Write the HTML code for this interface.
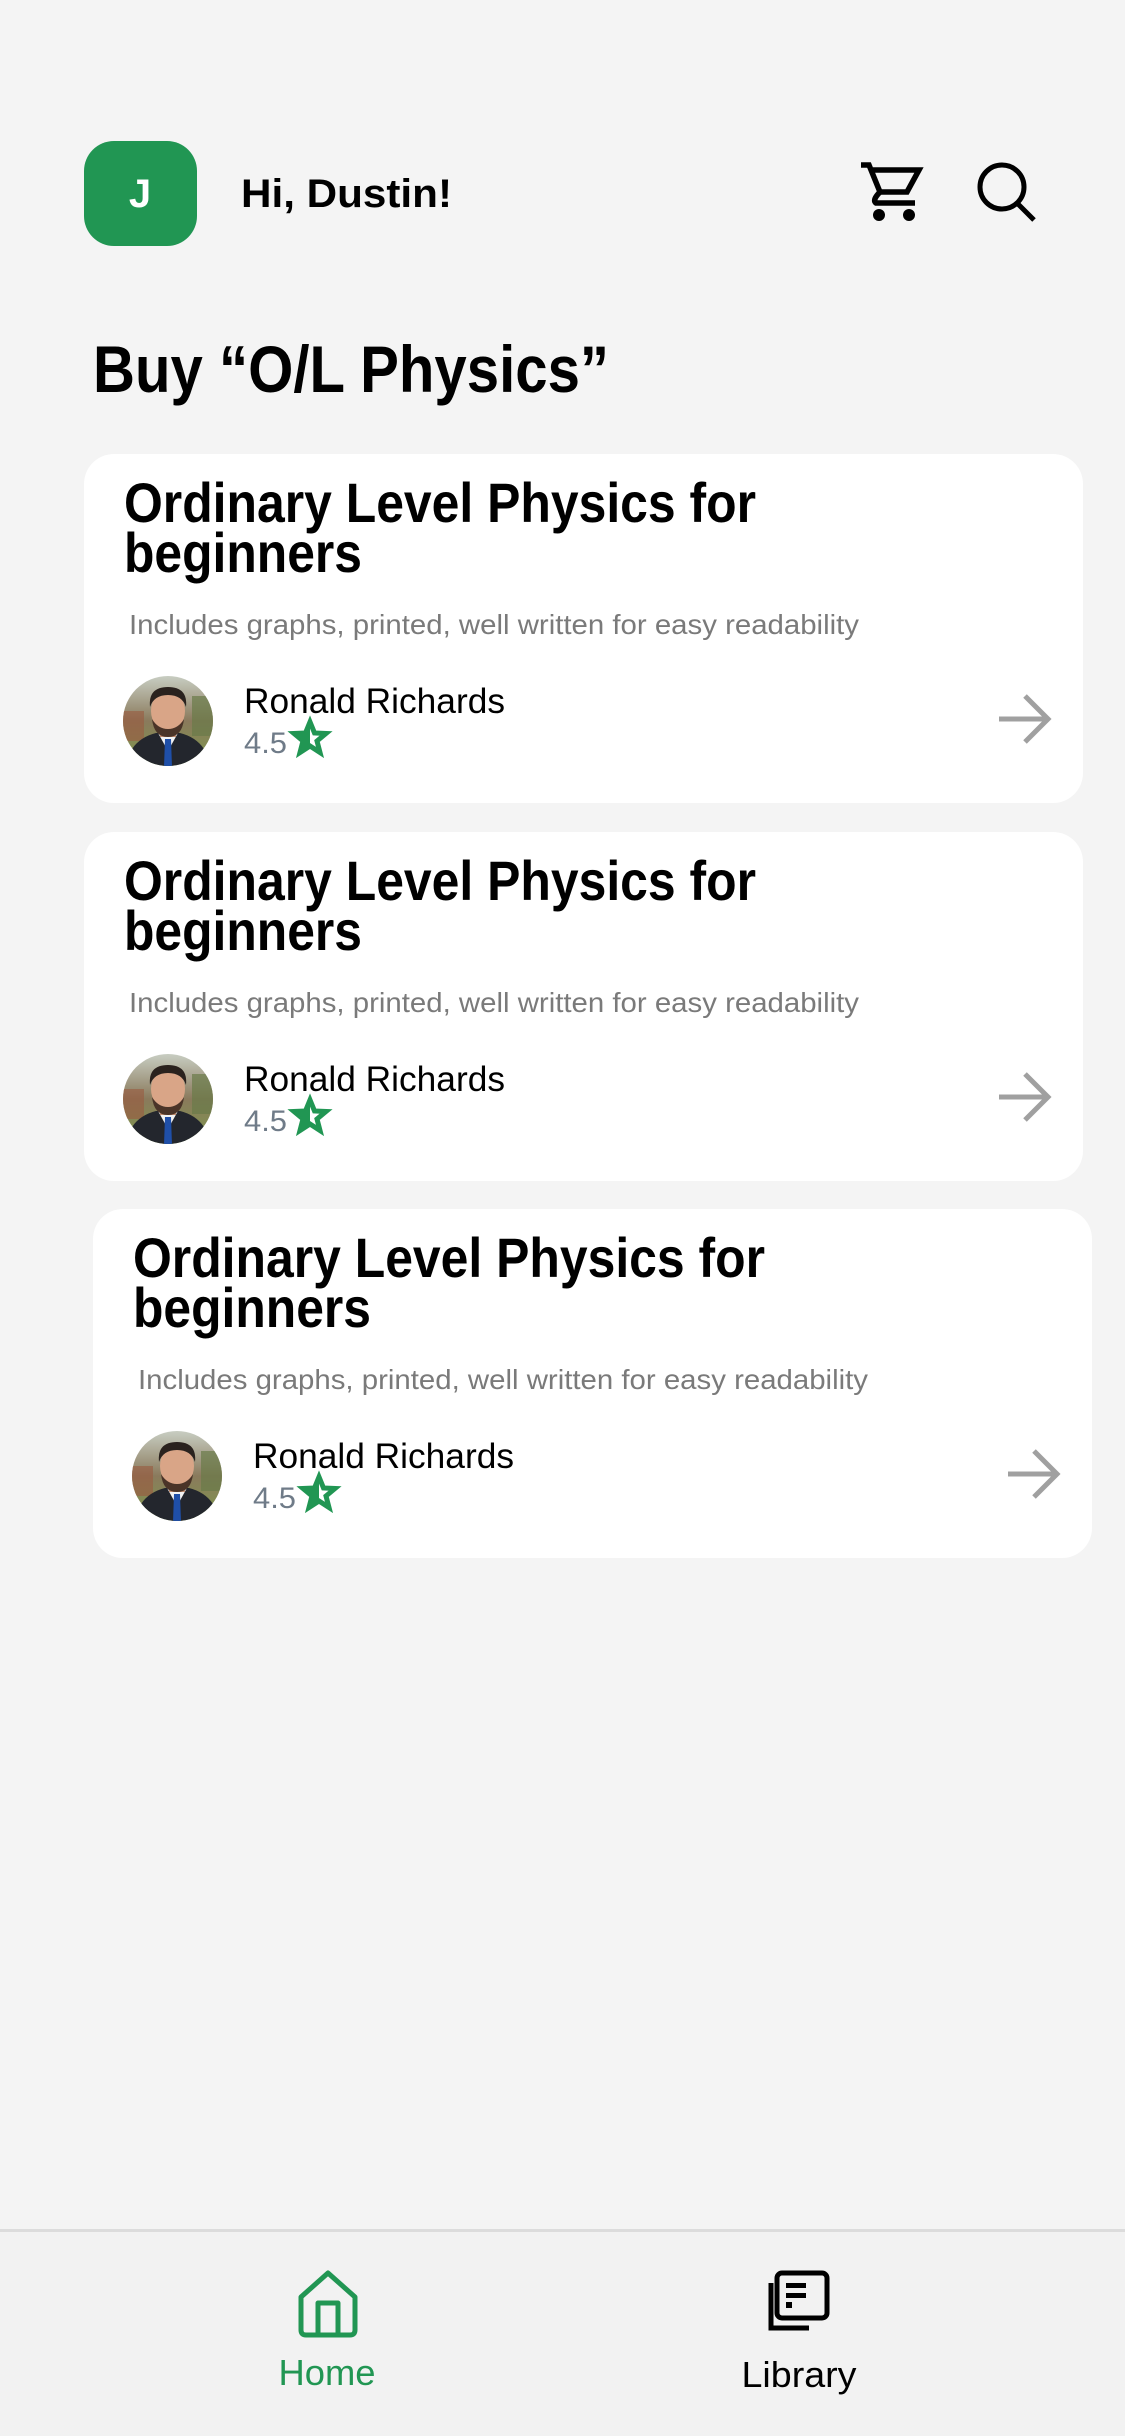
<!DOCTYPE html>
<html><head><meta charset="utf-8"><style>
html,body{margin:0;padding:0;background:#f4f4f4;width:1125px;height:2436px;overflow:hidden}
svg{display:block}
text{font-family:"Liberation Sans",sans-serif}
</style></head><body>
<svg width="1125" height="2436" viewBox="0 0 1125 2436" xmlns="http://www.w3.org/2000/svg">
<defs>
<clipPath id="av"><circle cx="0" cy="0" r="45"/></clipPath>
<linearGradient id="bg" x1="0" y1="0" x2="0" y2="1">
<stop offset="0" stop-color="#c9cfc4"/><stop offset="0.5" stop-color="#8a7a5c"/><stop offset="1" stop-color="#7d9a4c"/></linearGradient>
<g id="avatar">
<g clip-path="url(#av)">
<rect x="-46" y="-46" width="92" height="92" fill="url(#bg)"/>
<rect x="-46" y="-10" width="22" height="30" fill="#9a5a40" opacity="0.6"/>
<rect x="24" y="-25" width="22" height="40" fill="#6a7a48" opacity="0.7"/>
<path d="M-40 46 L-36 28 Q-28 16 -12 12 L12 12 Q28 16 36 28 L40 46Z" fill="#23262d"/>
<path d="M-10 12 L0 30 L10 12Z" fill="#f2f2f2"/>
<path d="M-3 18 L3 18 L4 46 L-4 46Z" fill="#1f4fa8"/>
<rect x="-8" y="4" width="16" height="12" fill="#c48f72"/>
<ellipse cx="0" cy="-10" rx="17" ry="21" fill="#d9a587"/>
<path d="M-16 -2 Q-14 16 0 16 Q14 16 16 -2 Q10 8 0 8 Q-10 8 -16 -2Z" fill="#4a3428"/>
<path d="M-18 -14 Q-20 -34 0 -34 Q20 -34 18 -14 Q14 -26 0 -26 Q-14 -26 -18 -14Z" fill="#2a221e"/>
</g></g>
<g id="card">
<rect x="0" y="0" width="999" height="349" rx="30" fill="#fff"/>
<text x="40" y="68" font-size="56" font-weight="700" fill="#000" textLength="632" lengthAdjust="spacingAndGlyphs">Ordinary Level Physics for</text>
<text x="40" y="118" font-size="56" font-weight="700" fill="#000" textLength="238" lengthAdjust="spacingAndGlyphs">beginners</text>
<text x="45" y="180" font-size="28" fill="#7a7a7a" textLength="730" lengthAdjust="spacingAndGlyphs">Includes graphs, printed, well written for easy readability</text>
<use href="#avatar" x="84" y="267"/>
<text x="160" y="259" font-size="35" fill="#000" textLength="261" lengthAdjust="spacingAndGlyphs">Ronald Richards</text>
<text x="160" y="299" font-size="30" fill="#6f7b88" textLength="43" lengthAdjust="spacingAndGlyphs">4.5</text>
<path d="M226 268 L230.5 279 L242 279.5 L233 287 L236 298.5 L226 292 L216 298.5 L219 287 L210 279.5 L221.5 279Z" fill="none" stroke="#219653" stroke-width="5" stroke-linejoin="miter"/>
<path d="M226 270 L221.5 279 L210 279.5 L219 287 L216 298.5 L226 292Z" fill="#219653"/>
<path d="M915 265 L963 265 M941 242 L964 265 L941 288" fill="none" stroke="#a0a0a0" stroke-width="5"/>
</g>
</defs>

<!-- header -->
<rect x="84" y="141" width="113" height="105" rx="30" fill="#219653"/>
<text x="140" y="207" font-size="40" font-weight="700" fill="#fff" text-anchor="middle">J</text>
<text x="241" y="207" font-size="40" font-weight="700" fill="#000" textLength="211" lengthAdjust="spacingAndGlyphs">Hi, Dustin!</text>

<g fill="none" stroke="#000" stroke-width="5.5">
<path d="M861 165 L869 165 L880 192 L907 192 L919 170 L873 170"/>
<path d="M880 192 Q872 200 876 203 L915 203"/>
</g>
<circle cx="879" cy="215" r="6" fill="#000"/>
<circle cx="909" cy="215" r="6" fill="#000"/>

<circle cx="1002" cy="187" r="22" fill="none" stroke="#000" stroke-width="5"/>
<path d="M1017 203 L1034 220" stroke="#000" stroke-width="5"/>

<text x="93" y="392" font-size="66" font-weight="700" fill="#000" textLength="516" lengthAdjust="spacingAndGlyphs">Buy “O/L Physics”</text>

<use href="#card" x="84" y="454"/>
<use href="#card" x="84" y="832"/>
<use href="#card" x="93" y="1209"/>

<!-- bottom nav -->
<rect x="0" y="2231" width="1125" height="205" fill="#f2f2f2"/>
<rect x="0" y="2229" width="1125" height="3" fill="#dcdcdc"/>
<g fill="none" stroke="#219653" stroke-width="5" stroke-linejoin="round">
<path d="M328 2273 L301 2297 L301 2330 Q301 2335 306 2335 L350 2335 Q355 2335 355 2330 L355 2297Z"/>
<path d="M318 2335 L318 2303 L338 2303 L338 2335"/>
</g>
<text x="327" y="2385" font-size="36" fill="#219653" text-anchor="middle" textLength="97" lengthAdjust="spacingAndGlyphs">Home</text>

<g fill="none" stroke="#000">
<rect x="777" y="2273" width="50" height="45" rx="5" stroke-width="5"/>
<path d="M771 2283 L771 2328 L809 2328" stroke-width="5"/>
</g>
<rect x="786" y="2283" width="20" height="5" fill="#000"/>
<rect x="786" y="2293" width="20" height="5" fill="#000"/>
<rect x="786" y="2302" width="6" height="6" fill="#000"/>
<text x="799" y="2387" font-size="36" fill="#000" text-anchor="middle" textLength="115" lengthAdjust="spacingAndGlyphs">Library</text>
</svg>
</body></html>
